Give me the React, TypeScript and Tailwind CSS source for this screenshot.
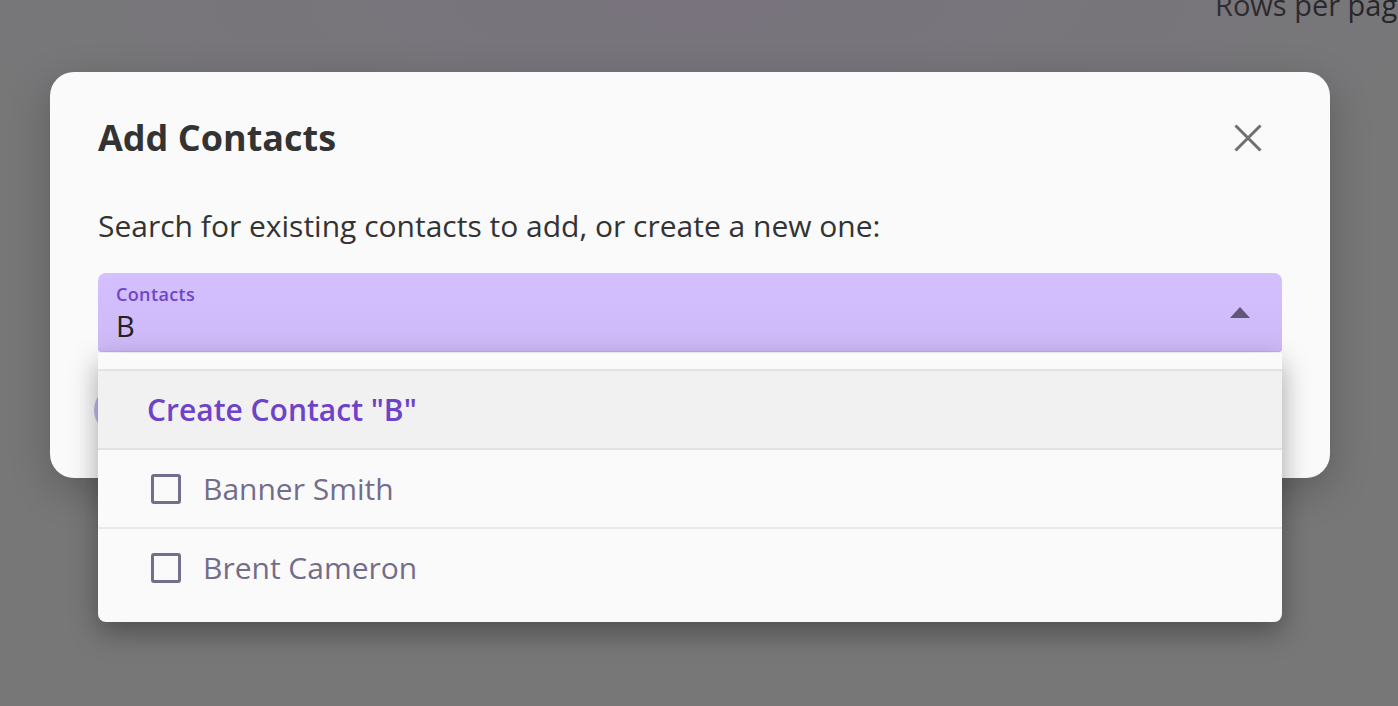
import React from "react";

const font = { fontFamily: '"Open Sans", "Noto Sans", sans-serif' };

function CloseIcon() {
  return (
    <svg width="28" height="28" viewBox="0 0 28 28" className="mr-[20px] shrink-0">
      <path d="M1.5 1.5 L26.5 26.5 M26.5 1.5 L1.5 26.5" stroke="#6f6f6f" strokeWidth="3" />
    </svg>
  );
}

function Checkbox() {
  return <div className="h-[30px] w-[30px] shrink-0 rounded-[3px] border-[3px] border-[#746d8c]" />;
}

export default function App() {
  const contacts = ["Banner Smith", "Brent Cameron"];

  return (
    <div style={font} className="relative h-[706px] w-[1398px] overflow-hidden bg-[#777777]">
      {/* page behind the dialog */}
      <div className="-mt-[13px] whitespace-nowrap pl-[1215px] text-[29px] leading-[36px] text-[#1d1d1f]">
        Rows per page
      </div>

      {/* backdrop + dialog */}
      <div className="absolute inset-0 bg-[radial-gradient(ellipse_60%_35%_at_50%_0%,rgba(122,112,132,0.5),rgba(119,119,119,0)_100%)] pl-[50px] pt-[72px]">
        <div className="h-[406px] w-[1280px] rounded-[24px] bg-[#fafafa] px-[48px] pt-[44px] shadow-[0_12px_40px_rgba(0,0,0,0.22)]">
          <div className="flex items-center">
            <h2 className="text-[36px] font-bold leading-[44px] text-[#333333]">Add Contacts</h2>
            <div className="ml-auto">
              <CloseIcon />
            </div>
          </div>

          <p className="mt-[46px] text-[30px] leading-[40px] text-[#333333]">
            Search for existing contacts to add, or create a new one:
          </p>

          <div className="relative mt-[27px]">
            <div className="flex h-[79px] items-center rounded-t-[8px] rounded-b-[4px] bg-gradient-to-b from-[#d4c0ff] to-[#ceb9f7] pl-[18px] pr-[32px] shadow-[inset_0_-1px_0_#c5b0ee]">
              <div className="flex flex-1 flex-col">
                <span className="text-[18px] font-semibold leading-[24px] tracking-[0.02em] text-[#6f45c8]">
                  Contacts
                </span>
                <span className="mt-[2px] text-[29px] leading-[36px] text-[#222222]">B</span>
              </div>
              <svg width="20" height="11" viewBox="0 0 20 11">
                <polygon points="10,0 20,11 0,11" fill="#5f5678" />
              </svg>
            </div>

            <div className="mt-[33px] -ml-[4px] h-[50px] w-[50px] rounded-full bg-[#c7b5f2]" />

            {/* open dropdown menu */}
            <div className="absolute left-0 right-0 top-[80px] z-10 rounded-b-[8px] bg-[#fafafa] py-[16px] shadow-[0_10px_28px_rgba(0,0,0,0.35)]">
              <div className="flex h-[81px] items-center border-y-2 border-[#e2e1e6] bg-[#f1f1f1] pl-[49px]">
                <span className="text-[30px] font-semibold text-[#6e42c9]">Create Contact "B"</span>
              </div>
              {contacts.map((name, i) => (
                <div
                  key={name}
                  className={
                    i === 0
                      ? "flex h-[79px] items-center gap-[22px] border-b-2 border-[#e9e9ec] pl-[53px]"
                      : "flex h-[77px] items-center gap-[22px] pl-[53px]"
                  }
                >
                  <Checkbox />
                  <span className="text-[30px] text-[#736d8a]">{name}</span>
                </div>
              ))}
            </div>
          </div>
        </div>
      </div>
    </div>
  );
}
